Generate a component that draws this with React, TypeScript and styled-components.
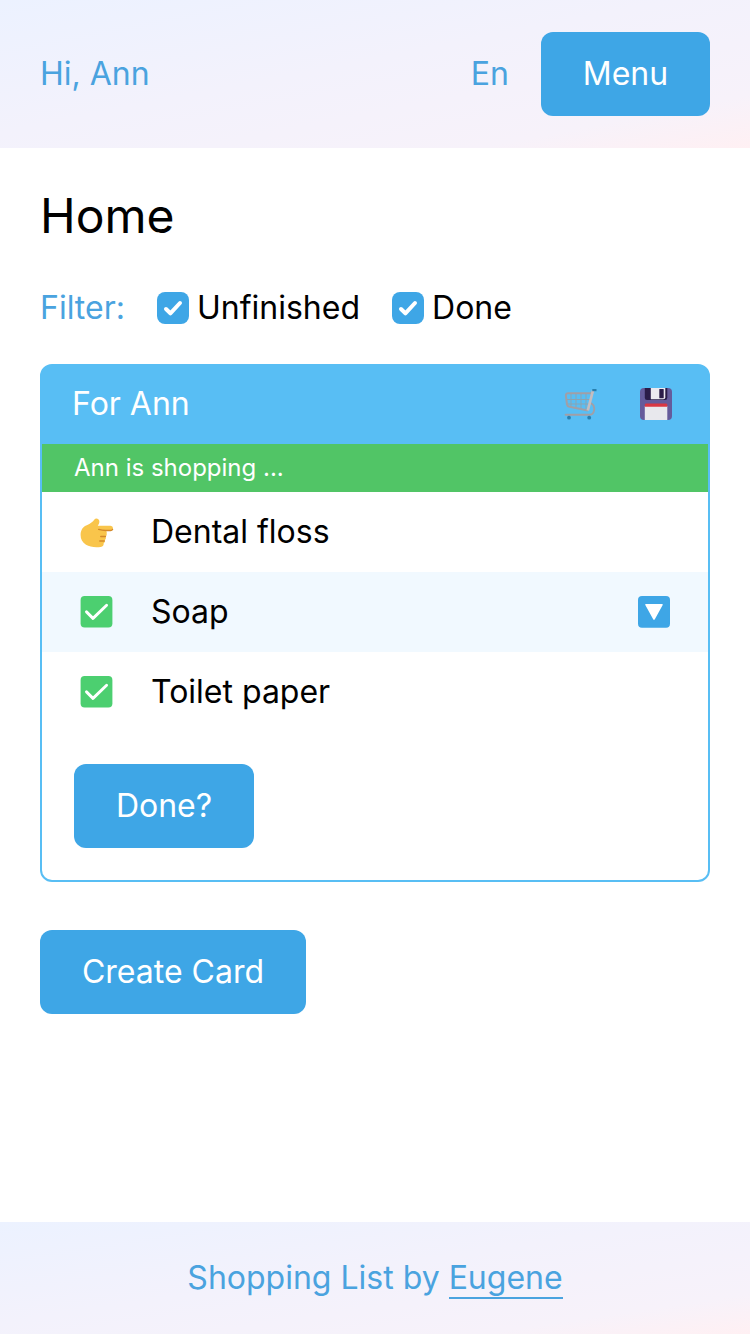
import React from "react";
import styled, { createGlobalStyle } from "styled-components";

const GlobalStyle = createGlobalStyle`
  *, *::before, *::after { box-sizing: border-box; }
  body {
    margin: 0;
    background: #fff;
    color: #000;
    font-family: Inter, "Liberation Sans", sans-serif;
    font-size: 32px;
    line-height: 48px;
  }
`;

const tint =
  "linear-gradient(to bottom right, #ecf2ff, #f3f2fc 45%, #f7f2fa 82%, #fff0f3)";

const Page = styled.div`
  min-height: 1334px;
  display: flex;
  flex-direction: column;
`;

const Header = styled.header`
  height: 148px;
  padding: 0 40px;
  display: flex;
  align-items: center;
  color: #4aa3df;
  background: ${tint};
`;

const Greeting = styled.span`
  flex: 1;
`;

const Language = styled.span`
  margin-right: 32px;
`;

const Button = styled.button<{ $width: number }>`
  width: ${(p) => p.$width}px;
  height: 84px;
  padding: 0;
  border: 0;
  border-radius: 12px;
  background: #3ea6e6;
  color: #fff;
  font: inherit;
`;

const Main = styled.main`
  flex: 1;
  padding: 32px 40px;
`;

const Title = styled.h1`
  margin: 0;
  font-size: 48px;
  font-weight: 400;
  line-height: 72px;
`;

const Filters = styled.div`
  margin-top: 32px;
  display: flex;
  align-items: center;
`;

const FilterName = styled.span`
  width: 117px;
  color: #4aa3df;
`;

const Check = styled.label`
  margin-right: 32px;
  display: flex;
  align-items: center;
  gap: 8px;
`;

const Card = styled.section`
  margin: 32px 0 48px;
  height: 518px;
  display: flex;
  flex-direction: column;
  border: 2px solid #58bef4;
  border-radius: 12px;
  background: #58bef4;
  overflow: hidden;
`;

const CardHeader = styled.div`
  height: 78px;
  padding: 0 36px 2px 30px;
  display: flex;
  align-items: center;
  gap: 43px;
  color: #fff;
`;

const CardTitle = styled.span`
  flex: 1;
`;

const Status = styled.div`
  height: 48px;
  padding-left: 32px;
  background: #51c566;
  color: #fff;
  font-size: 24px;
`;

const Item = styled.div<{ $active?: boolean }>`
  height: 80px;
  padding: 0 38px;
  display: flex;
  align-items: center;
  background: ${(p) => (p.$active ? "#f1f9ff" : "#fff")};
`;

const ItemMark = styled.span`
  width: 71px;
`;

const ItemName = styled.span`
  flex: 1;
`;

const CardActions = styled.div`
  flex: 1;
  padding: 32px;
  background: #fff;
`;

const Footer = styled.footer`
  height: 112px;
  display: flex;
  align-items: center;
  justify-content: center;
  color: #4aa3df;
  background: ${tint};
  white-space: pre;
`;

const AuthorLink = styled.a`
  height: 42px;
  line-height: 42px;
  border-bottom: 2px solid #4aa3df;
`;

const Icon = styled.svg`
  display: block;
  flex: none;
`;

const CheckboxIcon = () => (
  <Icon width="32" height="32" viewBox="0 0 32 32">
    <rect width="32" height="32" rx="8" fill="#3ea6e6" />
    <path d="M9 17l4.400 4.300L23 11" fill="none" stroke="#fff" strokeWidth="4" strokeLinecap="round" strokeLinejoin="round" />
  </Icon>
);

const DoneIcon = () => (
  <Icon width="33" height="32" viewBox="0 0 33 32">
    <rect x=".6" width="31.800" height="31.600" rx="4" fill="#4ccf70" />
    <path d="M6.500 15.900l6.500 6.500L26.600 9.200" fill="none" stroke="#fff" strokeWidth="2.900" strokeLinecap="round" strokeLinejoin="round" />
  </Icon>
);

const DownIcon = () => (
  <Icon width="32" height="32" viewBox="0 0 32 32">
    <rect width="32" height="31.700" rx="4" fill="#3ea6e6" />
    <path d="M8 8.700h16L16 23z" fill="#fff" stroke="#fff" strokeWidth="1.600" strokeLinejoin="round" />
  </Icon>
);

const PointIcon = () => (
  <Icon width="34" height="32" viewBox="0 0 34 32">
    <path
      d="M.6 19C.6 13.500 3.300 10.600 6.800 9.200C10.500 7.600 13 5.500 14.200 3.700C15.600 1.800 18.400 2.300 19.200 4.500C19.900 6.600 18.600 8.400 17.700 9.800H30.500Q33 10 33 12.200Q33 14.600 30.500 14.700H25.800Q27.200 15.500 26.700 17.300Q27.200 19.400 25.800 20.400Q26.300 22.500 25 24.100Q25.200 26.200 23.600 27.600Q24 30.500 20.700 30.900C15 31.600 9.500 30.900 6 28.700C2.300 26.400 .6 23 .6 19Z"
      fill="#f9c54b"
    />
    <g fill="none" stroke="#d3892b" strokeWidth="1.500" strokeLinecap="round">
      <path d="M18.700 13.400Q22 14.500 26 14.500H30.500Q32 14.400 32.500 13.500" />
      <path d="M20.800 20.400h4.600M19.800 25h4.400" />
    </g>
  </Icon>
);

const CartIcon = () => (
  <Icon width="33" height="32" viewBox="0 0 33 32">
    <path d="M7 6v12.500M12 6v13.500M17 6v14.500M22 6v15M2 11.500h24M2.500 16h23" fill="none" stroke="#8aa4b3" strokeWidth="1" />
    <path d="M28 5.300H4.200Q1.600 5.300 1.900 7.800L3 16.500Q3.300 18.300 5.500 18.700L24 22.400" fill="none" stroke="#a19fa6" strokeWidth="2" strokeLinejoin="round" />
    <path d="M27.500 15.500C30.800 17.500 30.700 22 29.500 24.300Q28.300 26.800 25.300 26.800H1.600" fill="none" stroke="#a19fa6" strokeWidth="1.900" strokeLinecap="round" />
    <path d="M23.800 22.500L29 2.500" fill="none" stroke="#c5bdc0" strokeWidth="2.700" />
    <path d="M28.300 2.200h4.200" stroke="#287fae" strokeWidth="2.200" />
    <circle cx="5" cy="29.700" r="1.900" fill="#287fae" />
    <circle cx="25.200" cy="29.700" r="1.900" fill="#287fae" />
  </Icon>
);

const SaveIcon = () => (
  <Icon width="32" height="32" viewBox="0 0 32 32">
    <rect width="32" height="32" rx="4" fill="#655b9b" />
    <path d="M4.800 0h22.500v9.800q0 2.200-2.200 2.200H7q-2.200 0-2.200-2.200z" fill="#2b1c48" />
    <path d="M10.800 0H25.300v9.200q0 2-2 2H10.800z" fill="#ece9ef" />
    <rect x="19.300" y="1" width="4.400" height="9.200" rx=".5" fill="#2b1c48" />
    <path d="M4.800 18h22.500v14H4.800z" fill="#e8e8ed" />
    <path d="M4.800 16.800q0-1.400 1.400-1.400h19.700q1.400 0 1.400 1.400v2H4.800z" fill="#d93743" />
  </Icon>
);

export default function App() {
  return (
    <Page>
      <GlobalStyle />
      <Header>
        <Greeting>Hi, Ann</Greeting>
        <Language>En</Language>
        <Button $width={169}>Menu</Button>
      </Header>
      <Main>
        <Title>Home</Title>
        <Filters>
          <FilterName>Filter:</FilterName>
          <Check><CheckboxIcon />Unfinished</Check>
          <Check><CheckboxIcon />Done</Check>
        </Filters>
        <Card>
          <CardHeader>
            <CardTitle>For Ann</CardTitle>
            <CartIcon />
            <SaveIcon />
          </CardHeader>
          <Status>Ann is shopping ...</Status>
          <Item>
            <ItemMark><PointIcon /></ItemMark>
            <ItemName>Dental floss</ItemName>
          </Item>
          <Item $active>
            <ItemMark><DoneIcon /></ItemMark>
            <ItemName>Soap</ItemName>
            <DownIcon />
          </Item>
          <Item>
            <ItemMark><DoneIcon /></ItemMark>
            <ItemName>Toilet paper</ItemName>
          </Item>
          <CardActions>
            <Button $width={180}>Done?</Button>
          </CardActions>
        </Card>
        <Button $width={266}>Create Card</Button>
      </Main>
      <Footer>
        Shopping List by <AuthorLink>Eugene</AuthorLink>
      </Footer>
    </Page>
  );
}
